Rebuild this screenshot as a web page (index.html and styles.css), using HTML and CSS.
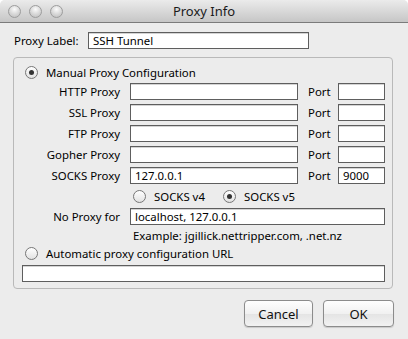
FILE: index.html
```html
<!DOCTYPE html>
<html lang="en">

<head>
    <meta charset="UTF-8">
    <title>Proxy Info</title>
    <link rel="stylesheet" href="styles.css">
</head>

<body>
    <div class="window">
        <div class="titlebar">
            <div class="lights">
                <span class="light"></span>
                <span class="light"></span>
                <span class="light"></span>
            </div>
            <div class="title">Proxy Info</div>
            <div></div>
        </div>

        <div class="content">
            <div class="label-row">
                <span class="name-label">Proxy Label:</span>
                <div class="field field-name">SSH Tunnel</div>
            </div>

            <div class="group">
                <div class="radio-row">
                    <span class="radio checked"></span>
                    <span>Manual Proxy Configuration</span>
                </div>

                <div class="proxy-grid">
                    <span class="row-label">HTTP Proxy</span>
                    <div class="field"></div>
                    <span class="port">Port</span>
                    <div class="field"></div>

                    <span class="row-label">SSL Proxy</span>
                    <div class="field"></div>
                    <span class="port">Port</span>
                    <div class="field"></div>

                    <span class="row-label">FTP Proxy</span>
                    <div class="field"></div>
                    <span class="port">Port</span>
                    <div class="field"></div>

                    <span class="row-label">Gopher Proxy</span>
                    <div class="field"></div>
                    <span class="port">Port</span>
                    <div class="field"></div>

                    <span class="row-label">SOCKS Proxy</span>
                    <div class="field">127.0.0.1</div>
                    <span class="port">Port</span>
                    <div class="field">9000</div>
                </div>

                <div class="socks-row">
                    <div class="radio-row socks-option">
                        <span class="radio"></span>
                        <span>SOCKS v4</span>
                    </div>
                    <div class="radio-row socks-option">
                        <span class="radio checked"></span>
                        <span>SOCKS v5</span>
                    </div>
                </div>

                <div class="proxy-grid noproxy">
                    <span class="row-label">No Proxy for</span>
                    <div class="field field-wide">localhost, 127.0.0.1</div>
                </div>

                <div class="example">Example: jgillick.nettripper.com, .net.nz</div>

                <div class="radio-row auto-row">
                    <span class="radio"></span>
                    <span>Automatic proxy configuration URL</span>
                </div>

                <div class="field field-auto"></div>
            </div>

            <div class="buttons">
                <button class="button cancel-btn">Cancel</button>
                <button class="button ok-btn">OK</button>
            </div>
        </div>
    </div>
</body>

</html>
```

FILE: styles.css
```css
html {
    background: #fff;
}

body {
    margin: 0;
    font-family: "Noto Sans", "DejaVu Sans", sans-serif;
    font-size: 11.4px;
    color: #000;
}

.window {
    width: 408px;
    height: 339px;
    background: #ececec;
    border-radius: 5px 5px 0 0;
    overflow: hidden;
}

.titlebar {
    height: 22px;
    border-bottom: 1px solid #7b7b7b;
    background: linear-gradient(#ebebeb, #c6c6c6);
    display: grid;
    grid-template-columns: 1fr auto 1fr;
    align-items: center;
}

.lights {
    display: flex;
    gap: 8px;
    padding-left: 8px;
}

.light {
    width: 13px;
    height: 13px;
    box-sizing: border-box;
    border-radius: 50%;
    border: 1px solid #9c9c9c;
    background: radial-gradient(circle at 50% 30%, #fbfbfb, #d6d6d6 55%, #bcbcbc);
}

.title {
    font-size: 13px;
    color: #1a1a1a;
}

.content {
    padding: 9px 14px 0 13px;
}

.label-row {
    display: flex;
    align-items: center;
    height: 17px;
}

.name-label {
    width: 75px;
    padding-left: 1px;
    box-sizing: border-box;
}

.field {
    box-sizing: border-box;
    height: 17px;
    line-height: 15px;
    padding: 0 4px;
    border: 1px solid #5e5e5e;
    background: #fff;
    box-shadow: inset 0 1px 0 #d4d4d4;
    white-space: nowrap;
    overflow: hidden;
}

.field-name {
    width: 221px;
}

.group {
    margin-top: 8px;
    width: 380px;
    height: 232px;
    box-sizing: border-box;
    border: 1px solid #b9b9b9;
    border-radius: 4px;
    padding: 8px 0 0 11px;
}

.radio-row {
    display: flex;
    align-items: center;
    gap: 8px;
    height: 13px;
}

.radio {
    width: 13px;
    height: 13px;
    box-sizing: border-box;
    border-radius: 50%;
    border: 1px solid #777;
    background: linear-gradient(#fff, #e2e2e2);
    display: flex;
    align-items: center;
    justify-content: center;
    flex-shrink: 0;
}

.radio.checked::after {
    content: "";
    width: 5px;
    height: 5px;
    border-radius: 50%;
    background: #333;
}

.proxy-grid {
    display: grid;
    grid-template-columns: 95px 168px 20px 47px;
    grid-auto-rows: 17px;
    column-gap: 10px;
    row-gap: 4px;
    align-items: center;
    margin-top: 4px;
}

.row-label {
    text-align: right;
}

.port {
    white-space: nowrap;
}

.socks-row {
    display: flex;
    margin: 6px 0 0 108px;
}

.socks-option {
    width: 90px;
}

.noproxy {
    margin-top: 5px;
}

.field-wide {
    grid-column: 2 / 5;
}

.example {
    margin: 4px 0 0 108px;
    line-height: 14px;
}

.auto-row {
    margin-top: 4px;
}

.field-auto {
    margin: 5px 0 0 -3px;
    width: 363px;
}

.buttons {
    display: flex;
    justify-content: flex-end;
    gap: 10px;
    margin-top: 11px;
}

.button {
    height: 27px;
    padding: 0;
    font-family: inherit;
    font-size: 13px;
    color: #111;
    border: 1px solid #8c8c8c;
    border-radius: 4px;
    background: linear-gradient(#fefefe, #f1f1f1 50%, #e4e4e4 52%, #f2f2f2);
    box-shadow: 0 1px 1px rgba(0, 0, 0, 0.15);
}

.cancel-btn {
    width: 69px;
}

.ok-btn {
    width: 71px;
}
```
